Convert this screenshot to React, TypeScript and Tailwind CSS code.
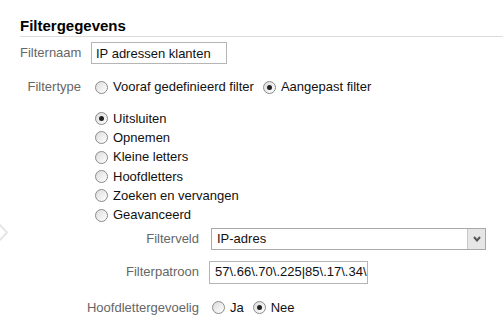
import React from "react";

function Radio({ checked = false }: { checked?: boolean }) {
  return (
    <span className="flex items-center justify-center w-[13px] h-[13px] shrink-0 rounded-full border border-[#8a8a8a] bg-gradient-to-br from-[#dcdcdc] to-white">
      {checked && <span className="block w-[5px] h-[5px] rounded-full bg-[#222]" />}
    </span>
  );
}

function RadioOption({ label, checked = false }: { label: string; checked?: boolean }) {
  return (
    <label className="flex items-center gap-[5px] text-[#111]">
      <Radio checked={checked} />
      <span>{label}</span>
    </label>
  );
}

const acties = [
  { label: "Uitsluiten", checked: true },
  { label: "Opnemen" },
  { label: "Kleine letters" },
  { label: "Hoofdletters" },
  { label: "Zoeken en vervangen" },
  { label: "Geavanceerd" },
];

export default function App() {
  return (
    <div className="relative w-[503px] h-[323px] overflow-hidden bg-white font-['Liberation_Sans',Arial,sans-serif] text-[13px] leading-[16px]">
      {/* faint arrow at left edge */}
      <svg className="absolute left-0 top-[224px]" width="8" height="17" viewBox="0 0 8 17">
        <path d="M-1 0 L7 8.5 L-1 17" fill="none" stroke="#e6e6e6" strokeWidth="2" />
      </svg>

      <div className="pl-[20px] pt-[17px]">
        <h2 className="text-[15px] font-bold leading-[18px] pb-[1px] text-black border-b border-[#dcdcdc]">
          Filtergegevens
        </h2>

        <div className="mt-[5px] flex items-center h-[22px]">
          <span className="w-[61px] text-right text-[#666]">Filternaam</span>
          <input
            readOnly
            value="IP adressen klanten"
            className="ml-[10px] w-[136px] h-[22px] px-[4px] border border-[#b5b5b5] text-[13px] text-[#111] outline-none"
          />
        </div>

        <div className="mt-[13px] flex items-center h-[20px]">
          <span className="w-[61px] text-right text-[#666]">Filtertype</span>
          <div className="ml-[14px] flex items-center gap-[9px]">
            <RadioOption label="Vooraf gedefinieerd filter" />
            <RadioOption label="Aangepast filter" checked />
          </div>
        </div>

        <div className="mt-[12px] ml-[75px] flex flex-col">
          {acties.map((a) => (
            <div key={a.label} className="h-[19.33px] flex items-center">
              <RadioOption label={a.label} checked={a.checked} />
            </div>
          ))}
        </div>
      </div>

      <div className="mt-[3px] flex items-center h-[22px]">
        <span className="w-[199px] text-right text-[#666]">Filterveld</span>
        <div className="ml-[12px] w-[275px] h-[22px] flex border border-[#a9a9a9]">
          <span className="flex-1 flex items-center pl-[5px] text-[#111]">IP-adres</span>
          <span className="w-[18px] flex items-center justify-center bg-[#e6e6e6] border-l border-[#c8c8c8]">
            <svg width="8" height="6" viewBox="0 0 8 6">
              <path d="M1 1 L4 4.5 L7 1" fill="none" stroke="#555" strokeWidth="2" />
            </svg>
          </span>
        </div>
      </div>

      <div className="mt-[11px] flex items-center h-[23px]">
        <span className="w-[199px] text-right text-[#666]">Filterpatroon</span>
        <div className="ml-[10px] w-[159px] h-[23px] flex items-center overflow-hidden whitespace-nowrap pl-[5px] border border-[#b5b5b5] text-[#111]">
          57\.66\.70\.225|85\.17\.34\.241
        </div>
      </div>

      <div className="mt-[14px] flex items-center h-[20px]">
        <span className="w-[199px] text-right text-[#666]">Hoofdlettergevoelig</span>
        <div className="ml-[13px] flex items-center gap-[9px]">
          <RadioOption label="Ja" />
          <RadioOption label="Nee" checked />
        </div>
      </div>
    </div>
  );
}
